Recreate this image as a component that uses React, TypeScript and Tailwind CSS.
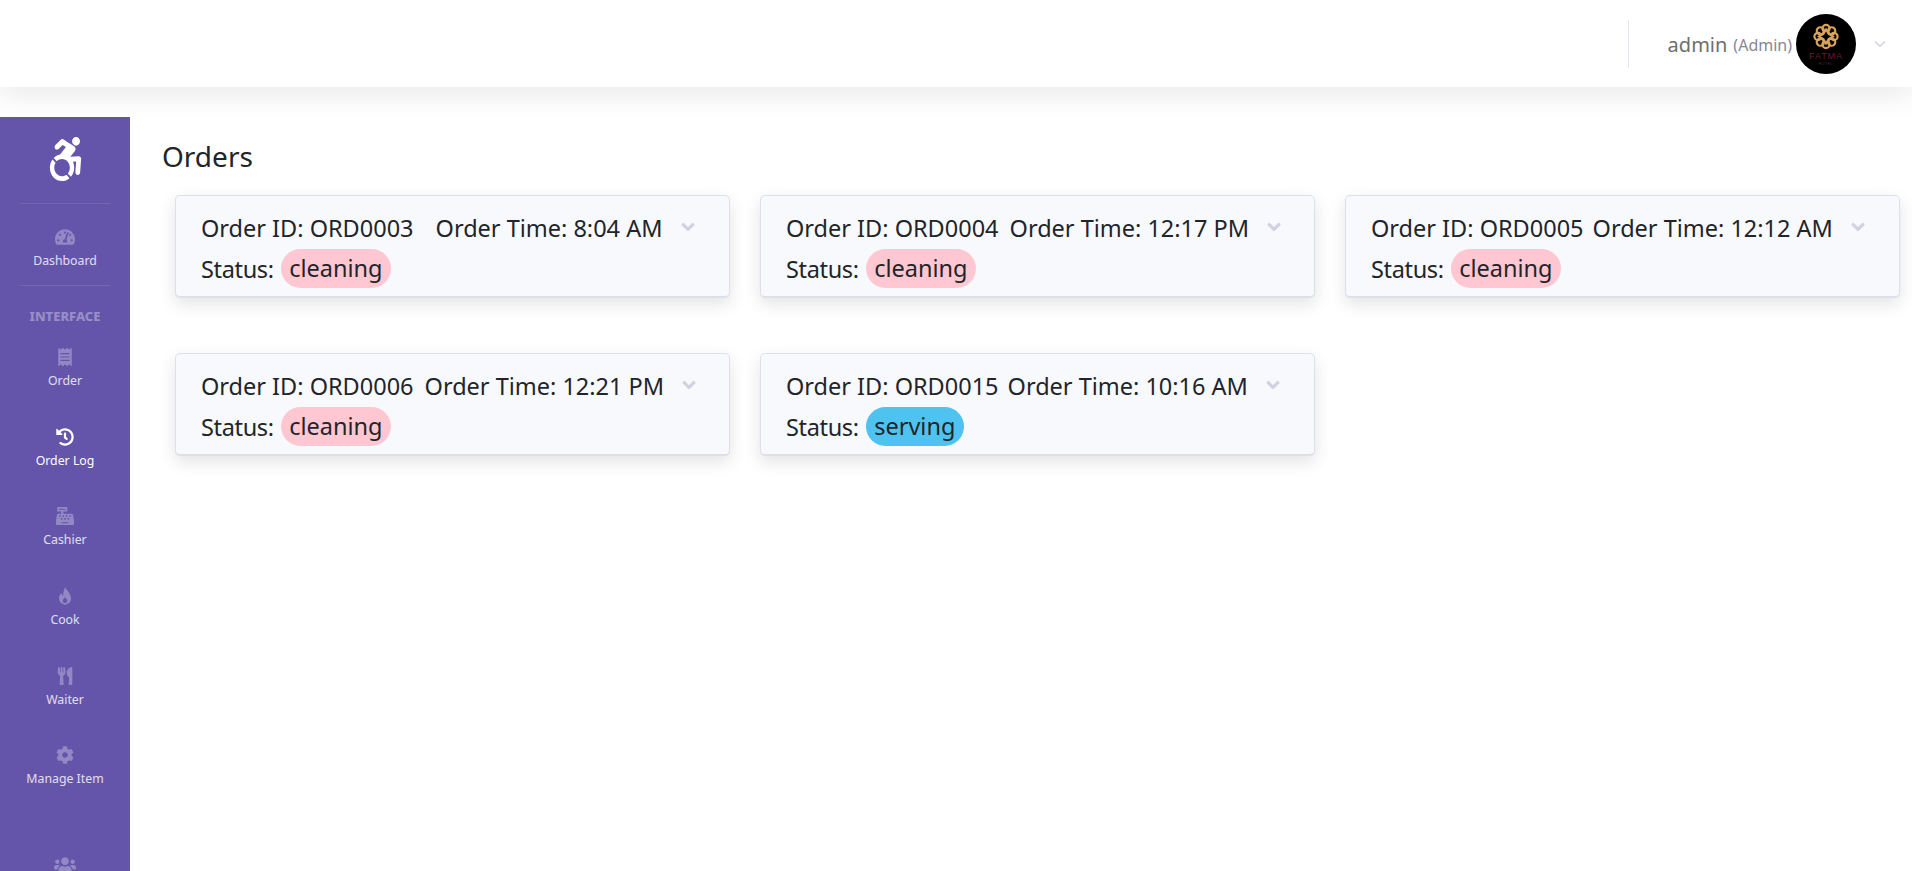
import React from "react";
import {
  FaAccessibleIcon,
  FaCashRegister,
  FaChevronDown,
  FaCog,
  FaHistory,
  FaReceipt,
  FaTachometerAlt,
  FaUsers,
  FaUtensils,
} from "react-icons/fa";
import { LuChevronDown } from "react-icons/lu";

const FlameIcon: React.FC<{ className?: string }> = ({ className }) => (
  <svg viewBox="0 0 24 24" fill="currentColor" fillRule="evenodd" className={className}>
    <path d="M12.500 0c.8 4.500 7.500 7.500 7.500 15.500a8 8 0 0 1-16 0c0-3.500 1.700-6 3.500-7.500.2 2 .8 3.200 2 4C9.300 8 10.500 3.500 12.500 0zM12 13.500c-1.700 1.800-3 3-3 4.700a3 3 0 0 0 6 0c0-1.700-1.300-2.900-3-4.700z" />
  </svg>
);

const NAV_ITEMS = [
  { label: "Order", icon: FaReceipt, active: false },
  { label: "Order Log", icon: FaHistory, active: true },
  { label: "Cashier", icon: FaCashRegister, active: false },
  { label: "Cook", icon: FlameIcon, active: false },
  { label: "Waiter", icon: FaUtensils, active: false },
  { label: "Manage Item", icon: FaCog, active: false },
];

const ORDERS = [
  { id: "ORD0003", time: "8:04 AM", status: "cleaning", gap: "ml-[22px]" },
  { id: "ORD0004", time: "12:17 PM", status: "cleaning", gap: "ml-[11px]" },
  { id: "ORD0005", time: "12:12 AM", status: "cleaning", gap: "ml-[9px]" },
  { id: "ORD0006", time: "12:21 PM", status: "cleaning", gap: "ml-[11px]" },
  { id: "ORD0015", time: "10:16 AM", status: "serving", gap: "ml-[9px]" },
];

const PETALS = [0, 45, 90, 135, 180, 225, 270, 315];

const Logo: React.FC = () => (
  <svg viewBox="0 0 60 60" className="size-[60px] shrink-0">
    <circle cx="30" cy="30" r="30" fill="#000" />
    <g fill="none" stroke="#d9a45a" strokeWidth="2.2">
      {PETALS.map((deg) => (
        <circle key={deg} cx="30" cy="14.5" r="3.6" transform={`rotate(${deg} 30 22.5)`} />
      ))}
      <path d="M30 15.5l2.6 4.4 4.4 2.6-4.4 2.6-2.6 4.4-2.6-4.4-4.4-2.6 4.4-2.6z" fill="#000" strokeWidth="2" />
    </g>
    <text x="30" y="44.5" textAnchor="middle" fill="#6f1a33" fontSize="9" letterSpacing="0.9" fontFamily="'Liberation Sans', sans-serif">
      FATMA
    </text>
    <text x="30" y="50.5" textAnchor="middle" fill="#5a2a34" fontSize="3.4" letterSpacing="0.7" fontFamily="'Liberation Sans', sans-serif">
      HOTEL
    </text>
  </svg>
);

const OrderCard: React.FC<{ id: string; time: string; status: string; gap: string }> = ({ id, time, status, gap }) => (
  <div className="h-[103px] w-[555px] rounded-[5px] border border-[#dddfeb] border-b-2 bg-[#f8f9fc] pl-[25px] pt-[14px] text-[23.5px] leading-[36px] text-[#212529] shadow-[0_6px_16px_rgba(58,59,69,0.14)]">
    <div className="flex items-center whitespace-nowrap">
      <span>Order ID: {id}</span>
      <span className={gap}>Order Time: {time}</span>
      <FaChevronDown stroke="currentColor" strokeWidth={40} className="ml-[18px] mb-[3px] size-[14px] text-[#d1d3e2]" />
    </div>
    <div className="mt-[3px] flex items-center whitespace-nowrap">
      <span className="tracking-[-0.35px]">Status:</span>
      <span className={`ml-[7px] rounded-[20px] px-[8.5px] leading-[39px] ${status === "serving" ? "bg-[#4fc3f0]" : "bg-[#ffc7d1]"}`}>
        {status}
      </span>
    </div>
  </div>
);

export default function App() {
  return (
    <div className="flex h-[871px] flex-col overflow-hidden bg-white font-['Noto_Sans','Open_Sans',sans-serif]">
      <header className="z-10 flex h-[87px] shrink-0 items-center justify-end bg-white shadow-[0_6px_28px_rgba(58,59,69,0.12)]">
        <div className="h-[48px] w-px bg-[#e3e6f0]" />
        <span className="ml-[39px] pt-[2px] text-[20px] text-[#6e6e6e]">admin</span>
        <span className="ml-[6px] pt-[2px] text-[16px] text-[#858796]">(Admin)</span>
        <div className="ml-[4px]">
          <Logo />
        </div>
        <LuChevronDown className="ml-[15px] mr-[23px] size-[18px] text-[#d1d3e2]" />
      </header>

      <div className="mt-[30px] flex min-h-0 flex-1">
        <aside className="flex w-[130px] shrink-0 flex-col items-center bg-[#6455ab] text-white">
          <FaAccessibleIcon preserveAspectRatio="none" className="mt-[20px] h-[44px] w-[35px] shrink-0" />
          <div className="mt-[22px] h-px w-[90px] shrink-0 bg-white/10" />
          <div className="mt-[23px] flex shrink-0 flex-col items-center">
            <FaTachometerAlt className="size-[20px] text-white/30" />
            <span className="mt-[4px] text-[12.3px] leading-[20px] text-white/80">Dashboard</span>
          </div>
          <div className="mt-[14px] h-px w-[90px] shrink-0 bg-white/10" />
          <div className="mt-[21px] mb-[11px] shrink-0 text-[13px] leading-[18px] font-extrabold text-white/35">INTERFACE</div>
          {NAV_ITEMS.map(({ label, icon: Icon, active }) => (
            <div key={label} className="mt-[12px] mb-[10px] flex h-[57.7px] shrink-0 flex-col items-center">
              <Icon className={`size-[18px] ${active ? "text-white" : "text-white/30"}`} />
              <span className={`mt-[5px] text-[12.3px] leading-[20px] ${active ? "text-white" : "text-white/80"}`}>{label}</span>
            </div>
          ))}
          <FaUsers className="mt-[40px] size-[22px] shrink-0 text-white/30" />
        </aside>

        <main className="min-w-0 flex-1 pl-[32px] pt-[19px]">
          <h1 className="text-[28px] leading-[40px] text-[#212529]">Orders</h1>
          <div className="mt-[19px] ml-[13px] flex w-[1750px] flex-wrap gap-x-[30px] gap-y-[55px]">
            {ORDERS.map((order) => (
              <OrderCard key={order.id} {...order} />
            ))}
          </div>
        </main>
      </div>
    </div>
  );
}
